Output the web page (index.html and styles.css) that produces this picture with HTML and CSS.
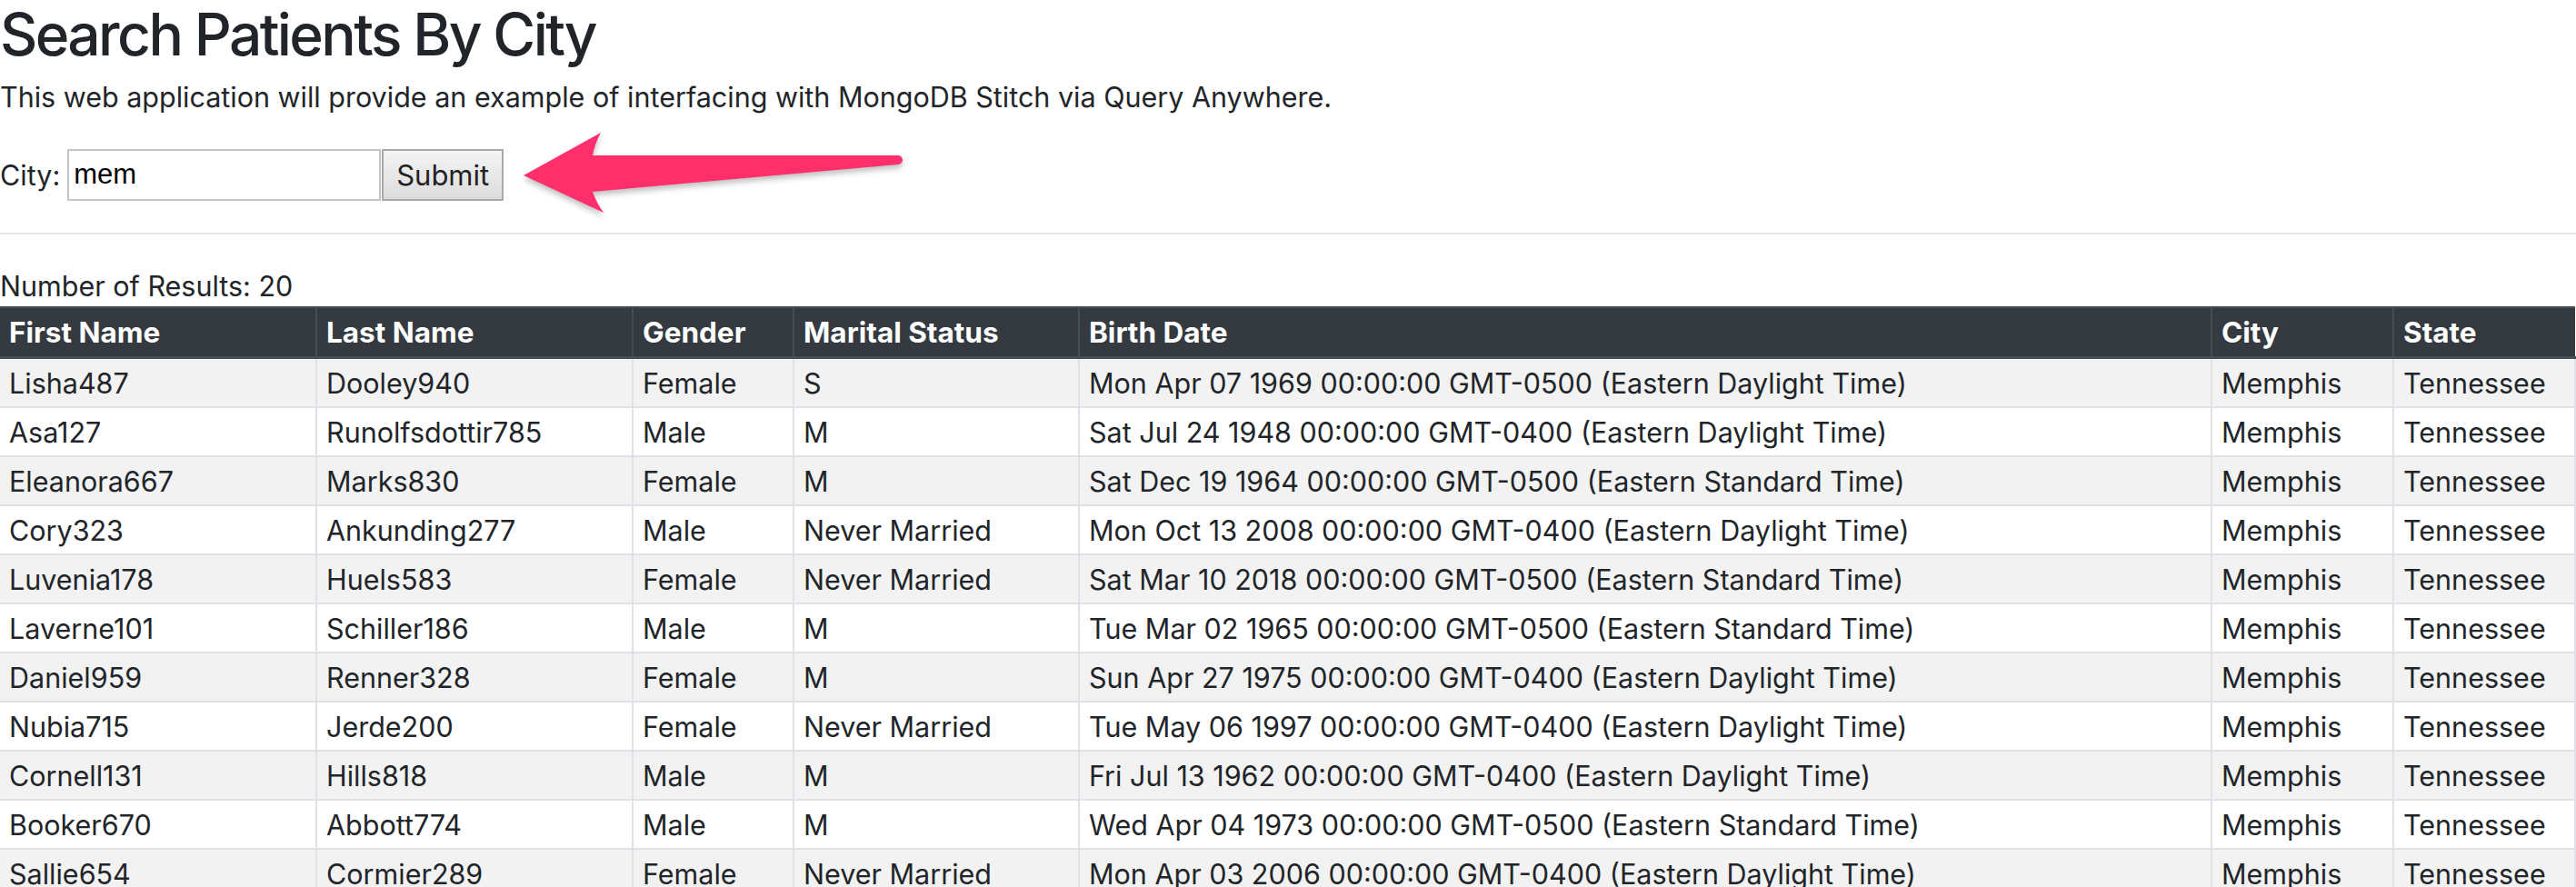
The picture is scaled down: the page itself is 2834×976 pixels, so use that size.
FILE: index.html
```html
<!DOCTYPE html>
<html lang="en">
<head>
<meta charset="utf-8">
<title>Search Patients By City</title>
<link rel="stylesheet" href="styles.css">
</head>
<body>
<div class="page">
  <h1 class="title">Search Patients By City</h1>
  <p class="lead-text">This web application will provide an example of interfacing with MongoDB Stitch via Query Anywhere.</p>
  <form class="search-form">
    <label class="city-label" for="city">City:</label>
    <input class="city-input" id="city" type="text" value="mem">
    <button class="submit-btn" type="button">Submit</button>
  </form>
  <hr class="divider">
  <div class="result-count">Number of Results: 20</div>
  <table class="results">
    <colgroup>
      <col class="c-first"><col class="c-last"><col class="c-gender"><col class="c-marital"><col class="c-birth"><col class="c-city"><col class="c-state">
    </colgroup>
    <thead>
      <tr><th>First Name</th><th>Last Name</th><th>Gender</th><th>Marital Status</th><th>Birth Date</th><th>City</th><th>State</th></tr>
    </thead>
    <tbody>
      <tr><td>Lisha487</td><td>Dooley940</td><td>Female</td><td>S</td><td>Mon Apr 07 1969 00:00:00 GMT-0500 (Eastern Daylight Time)</td><td>Memphis</td><td>Tennessee</td></tr>
      <tr><td>Asa127</td><td>Runolfsdottir785</td><td>Male</td><td>M</td><td>Sat Jul 24 1948 00:00:00 GMT-0400 (Eastern Daylight Time)</td><td>Memphis</td><td>Tennessee</td></tr>
      <tr><td>Eleanora667</td><td>Marks830</td><td>Female</td><td>M</td><td>Sat Dec 19 1964 00:00:00 GMT-0500 (Eastern Standard Time)</td><td>Memphis</td><td>Tennessee</td></tr>
      <tr><td>Cory323</td><td>Ankunding277</td><td>Male</td><td>Never Married</td><td>Mon Oct 13 2008 00:00:00 GMT-0400 (Eastern Daylight Time)</td><td>Memphis</td><td>Tennessee</td></tr>
      <tr><td>Luvenia178</td><td>Huels583</td><td>Female</td><td>Never Married</td><td>Sat Mar 10 2018 00:00:00 GMT-0500 (Eastern Standard Time)</td><td>Memphis</td><td>Tennessee</td></tr>
      <tr><td>Laverne101</td><td>Schiller186</td><td>Male</td><td>M</td><td>Tue Mar 02 1965 00:00:00 GMT-0500 (Eastern Standard Time)</td><td>Memphis</td><td>Tennessee</td></tr>
      <tr><td>Daniel959</td><td>Renner328</td><td>Female</td><td>M</td><td>Sun Apr 27 1975 00:00:00 GMT-0400 (Eastern Daylight Time)</td><td>Memphis</td><td>Tennessee</td></tr>
      <tr><td>Nubia715</td><td>Jerde200</td><td>Female</td><td>Never Married</td><td>Tue May 06 1997 00:00:00 GMT-0400 (Eastern Daylight Time)</td><td>Memphis</td><td>Tennessee</td></tr>
      <tr><td>Cornell131</td><td>Hills818</td><td>Male</td><td>M</td><td>Fri Jul 13 1962 00:00:00 GMT-0400 (Eastern Daylight Time)</td><td>Memphis</td><td>Tennessee</td></tr>
      <tr><td>Booker670</td><td>Abbott774</td><td>Male</td><td>M</td><td>Wed Apr 04 1973 00:00:00 GMT-0500 (Eastern Standard Time)</td><td>Memphis</td><td>Tennessee</td></tr>
      <tr><td>Sallie654</td><td>Cormier289</td><td>Female</td><td>Never Married</td><td>Mon Apr 03 2006 00:00:00 GMT-0400 (Eastern Daylight Time)</td><td>Memphis</td><td>Tennessee</td></tr>
    </tbody>
  </table>
  <svg class="callout-arrow" width="460" height="130" viewBox="0 0 460 130" aria-hidden="true">
    <path d="M16,63 L101,16 Q94,29 92,41 L428,41 A5,5 0 0 1 428,51 L92,81 Q96,93 104,104 Z"/>
  </svg>
</div>
</body>
</html>
```

FILE: styles.css
```css
html, body {
  margin: 0;
  padding: 0;
  background: #ffffff;
}

body {
  font-family: Inter, "Liberation Sans", sans-serif;
  color: #212529;
  font-size: 30.5px;
}

.page {
  position: relative;
}

.title {
  margin: 0;
  font-size: 64px;
  line-height: 76px;
  font-weight: 500;
  color: #212529;
  letter-spacing: -2.6px;
}

.lead-text {
  margin: 10px 0 0;
  font-size: 30.5px;
  line-height: 42px;
}

.search-form {
  display: flex;
  align-items: center;
  margin-top: 35px;
  height: 58px;
}

.city-label {
  font-size: 30.5px;
  margin-right: 8px;
}

.city-input {
  box-sizing: border-box;
  width: 345px;
  height: 57px;
  border: 2px solid #c4c4c4;
  padding: 0 5px;
  font-family: "Liberation Sans", Arial, sans-serif;
  font-size: 31px;
  color: #000;
  background: #fff;
  outline: none;
}

.submit-btn {
  box-sizing: border-box;
  width: 134px;
  height: 57px;
  margin-left: 1px;
  border: 2px solid #a8a8a8;
  border-radius: 1px;
  background: linear-gradient(#f4f4f4, #dcdcdc);
  font-family: Inter, "Liberation Sans", sans-serif;
  font-size: 31px;
  color: #222;
  padding: 0;
}

.divider {
  margin: 35px 0 0;
  border: 0;
  border-top: 2px solid #e6e6e6;
  height: 0;
}

.result-count {
  margin-top: 36px;
  font-size: 30.5px;
  line-height: 42px;
}

.results {
  width: 100%;
  table-layout: fixed;
  border-collapse: collapse;
  margin-top: 1px;
}

.c-first { width: 348px; }
.c-last { width: 348px; }
.c-gender { width: 177px; }
.c-marital { width: 314px; }
.c-birth { width: 1246px; }
.c-city { width: 200px; }
.c-state { width: auto; }

.results th,
.results td {
  text-align: left;
  padding: 0 10px;
  white-space: nowrap;
  overflow: hidden;
}

.results th {
  background: #343a40;
  color: #fff;
  font-weight: 700;
  font-size: 31.5px;
  height: 53px;
  border-left: 2px solid #454d55;
  border-bottom: 3px solid #454d55;
  border-top: 2px solid #454d55;
}

.results td {
  height: 52px;
  font-size: 30.5px;
  border: 2px solid #dee2e6;
  color: #212529;
}

.results th:first-child,
.results td:first-child {
  border-left: 0;
}

.results tbody tr:nth-child(odd) td {
  background: #f2f2f2;
}

.callout-arrow {
  position: absolute;
  left: 560px;
  top: 130px;
  fill: #ff2f6b;
  filter: drop-shadow(0 4px 3px rgba(0, 0, 0, 0.25));
}
```
